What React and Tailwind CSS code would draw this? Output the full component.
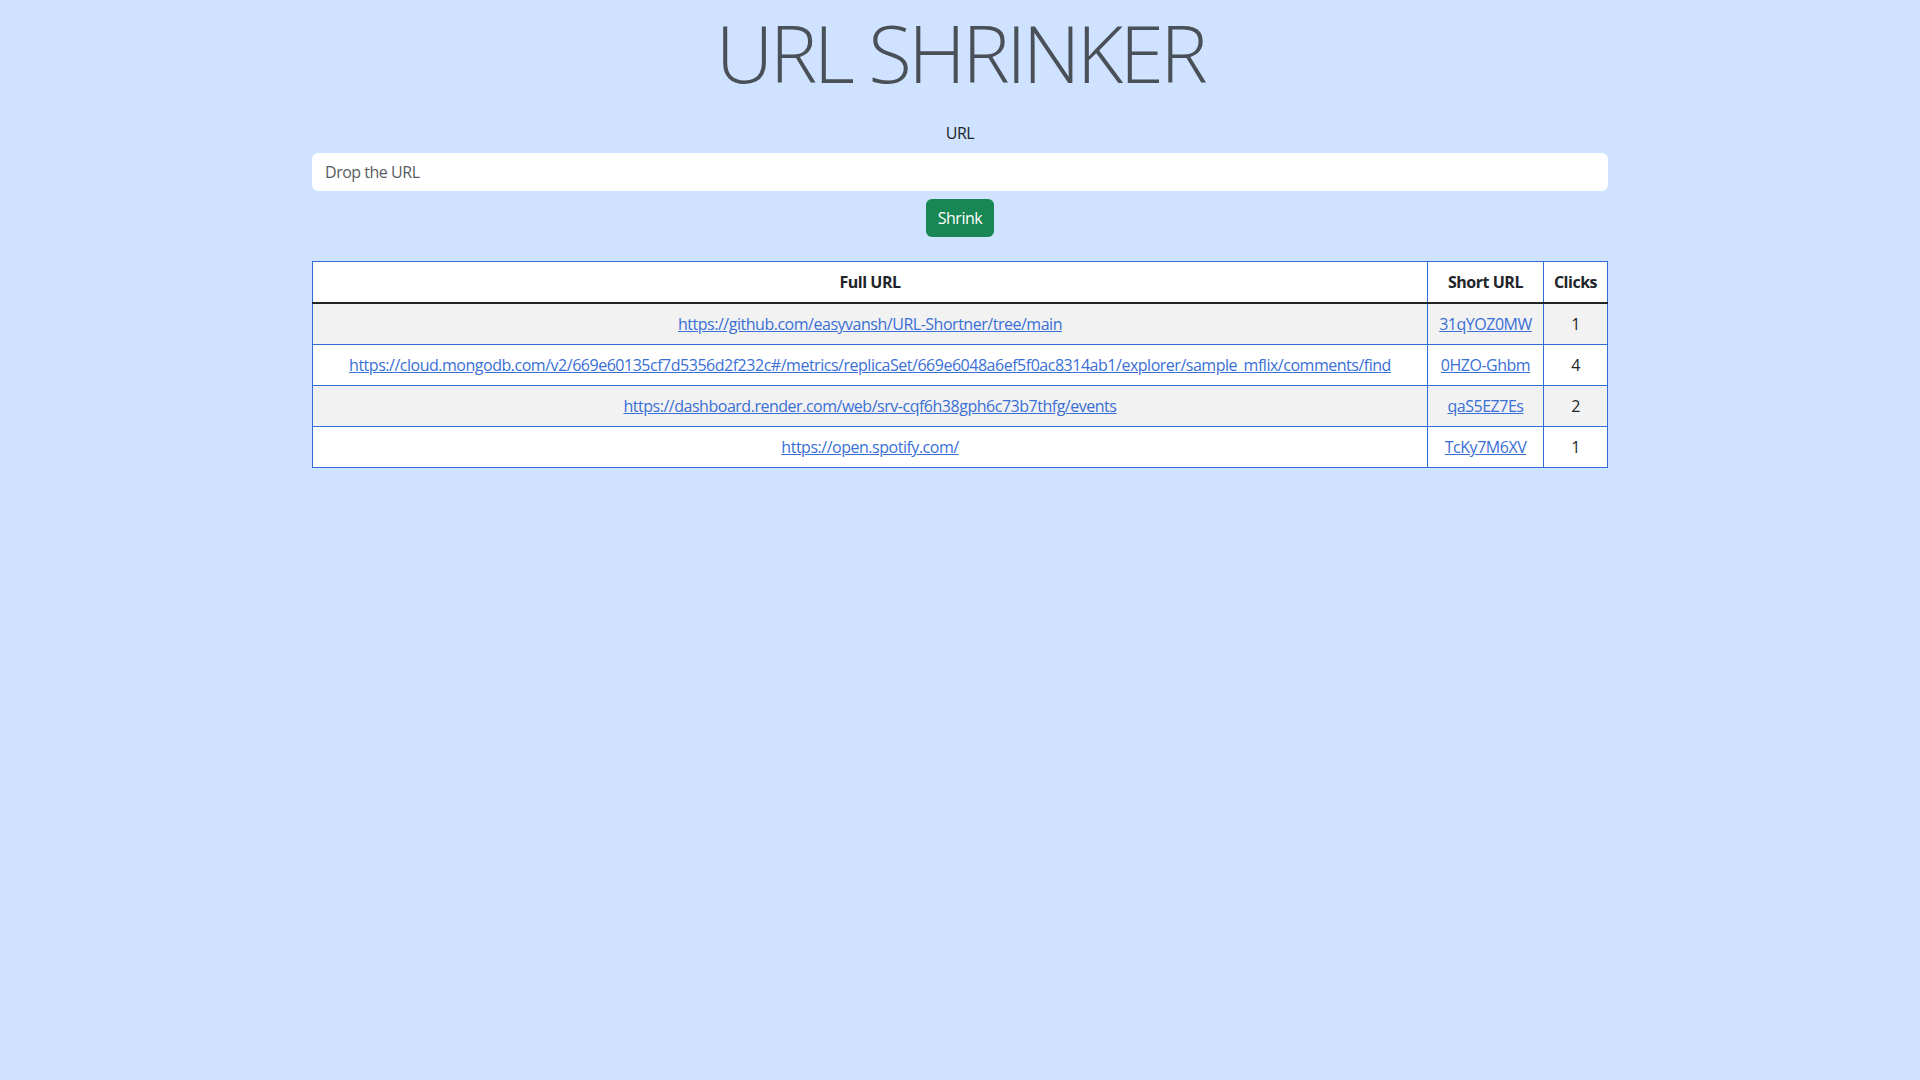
const urls = [
  { full: 'https://github.com/easyvansh/URL-Shortner/tree/main', short: '31qYOZ0MW', clicks: 1 },
  {
    full: 'https://cloud.mongodb.com/v2/669e60135cf7d5356d2f232c#/metrics/replicaSet/669e6048a6ef5f0ac8314ab1/explorer/sample_mflix/comments/find',
    short: '0HZO-Ghbm',
    clicks: 4,
  },
  { full: 'https://dashboard.render.com/web/srv-cqf6h38gph6c73b7thfg/events', short: 'qaS5EZ7Es', clicks: 2 },
  { full: 'https://open.spotify.com/', short: 'TcKy7M6XV', clicks: 1 },
];

const App = () => {
  return (
    <div className="min-h-screen bg-[#cfe2ff] text-[#212529] font-['Open_Sans',sans-serif] text-base tracking-[-0.03em]">
      <div className="mx-auto w-[1320px] px-3">
        <h1 className="pt-1 text-center text-[80px] font-light leading-[1.2] tracking-[-0.045em] text-[#495057] mb-2">URL SHRINKER</h1>

        <form className="mt-[21px] flex flex-col items-center" onSubmit={(e) => e.preventDefault()}>
          <label htmlFor="fullUrl" className="block leading-6 mb-2">URL</label>
          <input
            id="fullUrl"
            type="url"
            placeholder="Drop the URL"
            className="w-full h-[38px] px-3 bg-white rounded-md border border-white tracking-[-0.03em] placeholder:text-[#595c5f] outline-none"
          />
          <button
            type="submit"
            className="mt-2 h-[38px] px-3 rounded-md bg-[#198754] text-white leading-6"
          >
            Shrink
          </button>
        </form>

        <table className="mt-6 w-full table-fixed border-collapse border border-[#2f6fd1] bg-white text-center">
          <thead>
            <tr>
              <th className="py-2 px-2 font-bold leading-6 border border-[#2f6fd1] border-b-2 border-b-[#212529]">Full URL</th>
              <th className="py-2 px-2 font-bold leading-6 w-[116px] border border-[#2f6fd1] border-b-2 border-b-[#212529]">Short URL</th>
              <th className="py-2 px-1 font-bold leading-6 w-[64px] border border-[#2f6fd1] border-b-2 border-b-[#212529]">Clicks</th>
            </tr>
          </thead>
          <tbody>
            {urls.map((u, i) => (
              <tr key={u.short} className={i % 2 === 0 ? 'bg-[#f2f2f2]' : 'bg-white'}>
                <td className="py-2 px-2 leading-6 border border-[#2f6fd1]">
                  <a href="#" className="text-[#3a6fd6] underline whitespace-nowrap">{u.full}</a>
                </td>
                <td className="py-2 px-2 leading-6 border border-[#2f6fd1]">
                  <a href="#" className="text-[#3a6fd6] underline whitespace-nowrap">{u.short}</a>
                </td>
                <td className="py-2 px-2 leading-6 border border-[#2f6fd1]">{u.clicks}</td>
              </tr>
            ))}
          </tbody>
        </table>
      </div>
    </div>
  );
};

export default App;
